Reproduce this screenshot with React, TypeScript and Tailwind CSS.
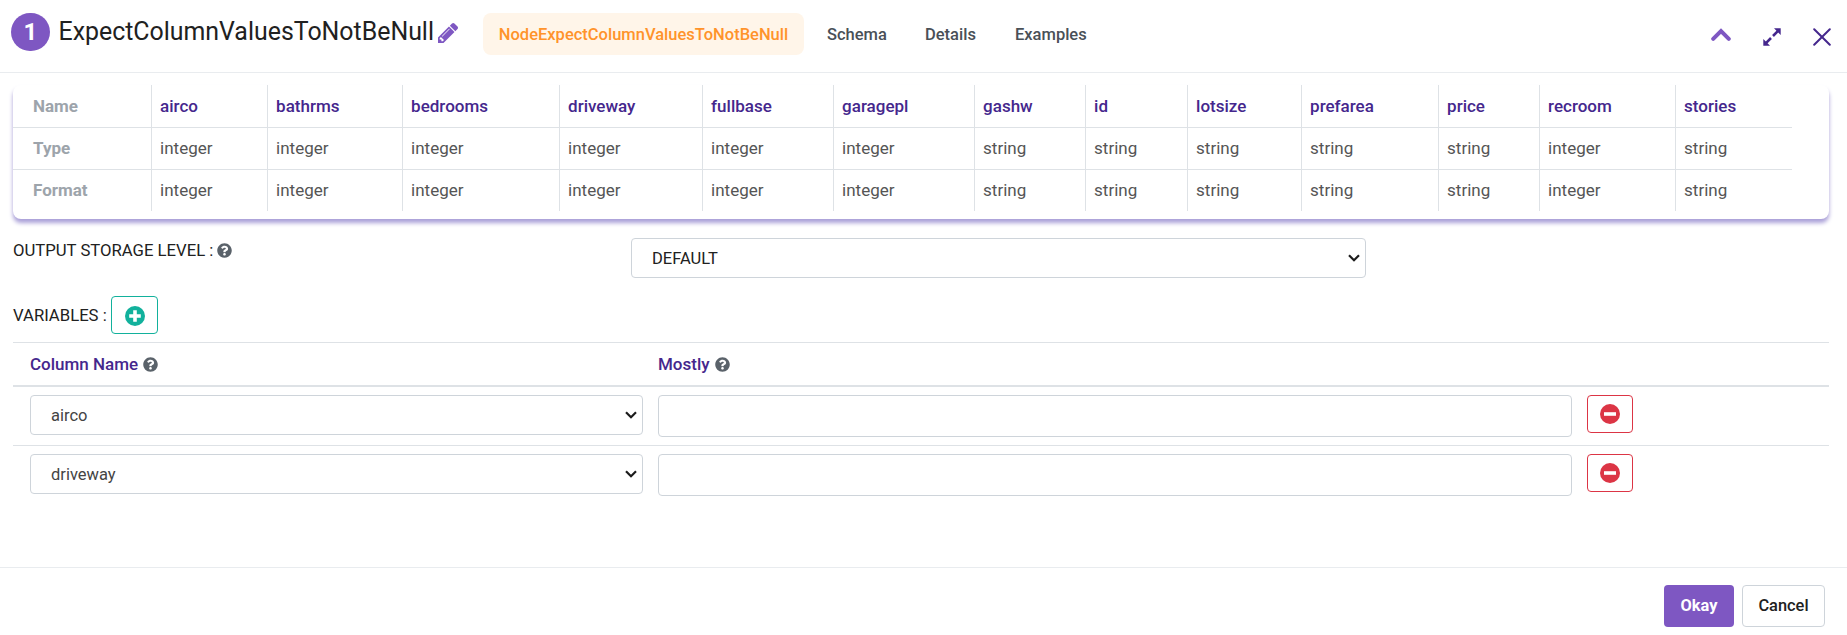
import { FaQuestionCircle } from "react-icons/fa";

const columns = [
  { name: "airco", type: "integer", width: "w-[116px]" },
  { name: "bathrms", type: "integer", width: "w-[135px]" },
  { name: "bedrooms", type: "integer", width: "w-[157px]" },
  { name: "driveway", type: "integer", width: "w-[143px]" },
  { name: "fullbase", type: "integer", width: "w-[131px]" },
  { name: "garagepl", type: "integer", width: "w-[141px]" },
  { name: "gashw", type: "string", width: "w-[111px]" },
  { name: "id", type: "string", width: "w-[102px]" },
  { name: "lotsize", type: "string", width: "w-[114px]" },
  { name: "prefarea", type: "string", width: "w-[137px]" },
  { name: "price", type: "string", width: "w-[101px]" },
  { name: "recroom", type: "integer", width: "w-[136px]" },
  { name: "stories", type: "string", width: "w-[117px]" },
];

const rows = ["airco", "driveway"];

function Chevron() {
  return (
    <svg width="12" height="8" viewBox="0 0 12 8" fill="none" stroke="#1c1c1c" strokeWidth="2.2">
      <path d="M1 1.2 6 6.2l5-5" />
    </svg>
  );
}

function Help() {
  return <FaQuestionCircle size={15} color="#5a626a" />;
}

function CircleIcon({ d }: { d: string }) {
  return (
    <svg width="20" height="20" viewBox="0 0 20 20">
      <circle cx="10" cy="10" r="10" fill="currentColor" />
      <path d={d} stroke="#fff" strokeWidth="3.6" fill="none" />
    </svg>
  );
}

function Select({ value, className }: { value: string; className: string }) {
  return (
    <div className={`flex h-10 items-center justify-between rounded border border-[#ced4da] pr-[5px] pl-5 text-[16.5px] ${className}`}>
      <span className="pt-0.5">{value}</span>
      <Chevron />
    </div>
  );
}

export default function App() {
  return (
    <div className="flex h-[635px] w-[1847px] flex-col overflow-hidden bg-white font-['Roboto',sans-serif] text-base leading-6 text-[#212121]">
      <header className="flex h-[73px] shrink-0 items-start border-b border-[#e9ecef] pl-[11px]">
        <div className="mt-[13px] flex h-[38px] w-[39px] items-center justify-center rounded-full bg-[#7e57c2] text-2xl font-bold text-white">1</div>
        <h1 className="mt-4 ml-[8.5px] w-[378.5px] text-[24.9px] leading-8 whitespace-nowrap text-[#212121]">ExpectColumnValuesToNotBeNull</h1>
        <svg className="mt-[23px] ml-px" width="20" height="20" viewBox="128 149 1515 1515" fill="#7e57c2">
          <path d="M491 1536l91-91-235-235-91 91v107h128v128h107zM1014 608q0-22-22-22-10 0-17 7l-542 542q-7 7-7 17 0 22 22 22 10 0 17-7l542-542q7-7 7-17zM960 416l416 416-832 832h-416v-416zM1643 512q0 53-37 90l-166 166-416-416 166-165q36-38 90-38 53 0 91 38l235 234q37 39 37 91z" />
        </svg>
        <nav className="mt-[13px] ml-[25px] flex items-center text-[16.5px] font-medium text-[#495057]">
          <div className="flex h-[42px] w-[321px] items-center justify-center rounded-lg bg-[#fff5e9] pt-0.5 text-[#ff932b]">NodeExpectColumnValuesToNotBeNull</div>
          <span className="ml-[23px] w-[98px] pt-0.5">Schema</span>
          <span className="w-[90px] pt-0.5">Details</span>
          <span className="pt-0.5">Examples</span>
        </nav>
        <div className="mt-7 ml-auto flex items-start pr-4">
          <svg className="mr-[32px]" width="20" height="14" viewBox="0 0 20 14" fill="none" stroke="#7e57c2" strokeWidth="4" strokeLinecap="round">
            <path d="m2.2 10.8 7.8-7.8 7.8 7.8" />
          </svg>
          <svg className="mr-[32px]" width="18" height="18" viewBox="0 0 18 18" fill="#45278d">
            <path d="M11 .3h6.7V7zM.3 11v6.7H7z" />
            <path d="M14.8 3.2 10 8M8 10l-4.8 4.8" stroke="#45278d" strokeWidth="2.6" />
          </svg>
          <svg width="18" height="18" viewBox="0 0 18 18" fill="none" stroke="#45278d" strokeWidth="2" strokeLinecap="round">
            <path d="m1.2 1.2 15.6 15.6M16.8 1.2 1.2 16.8" />
          </svg>
        </div>
      </header>

      <main className="flex h-[494px] shrink-0 flex-col pt-3 pr-[18px] pl-[13px]">
        <section className="h-[134px] shrink-0 rounded-lg pb-2 shadow-[0_4px_4px_#aaa0d8]">
          <table className="w-[1779px] table-fixed border-collapse text-[17px]">
            <tbody>
              <tr className="h-[42px] border-b border-[#dee2e6]">
                <th className="w-[138px] pl-5 text-left font-bold text-[#9da4ab]">Name</th>
                {columns.map((c) => (
                  <th key={c.name} className={`border-l border-[#dee2e6] pl-[8.6px] text-left font-medium text-[#45278d] ${c.width}`}>{c.name}</th>
                ))}
              </tr>
              {["Type", "Format"].map((label) => (
                <tr key={label} className="h-[42px] border-b border-[#dee2e6] last:border-b-0">
                  <th className="pl-5 text-left font-bold text-[#9da4ab]">{label}</th>
                  {columns.map((c) => (
                    <td key={c.name} className="border-l border-[#dee2e6] pl-[8.6px] text-[#555]">{c.type}</td>
                  ))}
                </tr>
              ))}
            </tbody>
          </table>
        </section>

        <div className="mt-[19px] flex h-10">
          <div className="flex h-6 w-[618px] items-center gap-1">
            <span className="pt-0.5 text-[16.7px]">OUTPUT STORAGE LEVEL :</span>
            <Help />
          </div>
          <Select value="DEFAULT" className="w-[735px]" />
        </div>

        <div className="mt-[18px] flex h-[38px] items-center">
          <span className="w-[98px] pt-0.5 text-[16.7px]">VARIABLES :</span>
          <button className="flex h-[38px] w-[47px] items-center justify-center rounded border border-[#12b19c] pt-px text-[#12b19c]">
            <CircleIcon d="M10 4.2v11.6M4.2 10h11.6" />
          </button>
        </div>

        <div className="mt-2 flex h-[45px] items-center border-t border-b-2 border-[#dee2e6] pl-[17px] text-[17px] font-medium text-[#45278d]">
          <div className="flex w-[628px] items-center gap-[5px]">
            <span>Column Name</span> <Help />
          </div>
          <div className="flex items-center gap-[5px]">
            <span>Mostly</span> <Help />
          </div>
        </div>
        {rows.map((value) => (
          <div key={value} className="flex h-[59px] items-start border-b border-[#dee2e6] pt-2 pl-[17px] last:border-b-0">
            <Select value={value} className="w-[613px] text-[#444]" />
            <div className="ml-[15px] h-[42px] w-[914px] rounded border border-[#ced4da]" />
            <button className="ml-[15px] flex h-[38px] w-[46px] items-center justify-center rounded border border-[#dc3545] text-[#dc3545]">
              <CircleIcon d="M4 10h12" />
            </button>
          </div>
        ))}
      </main>

      <footer className="flex h-[68px] justify-end gap-2 border-t border-[#e9ecef] pt-[17px] pr-[22px] text-[16.4px]">
        <button className="h-[42px] w-[70px] rounded bg-[#7e57c2] font-bold text-white">Okay</button>
        <button className="h-[42px] w-[83px] rounded border border-[#ced4da] font-medium">Cancel</button>
      </footer>
    </div>
  );
}
